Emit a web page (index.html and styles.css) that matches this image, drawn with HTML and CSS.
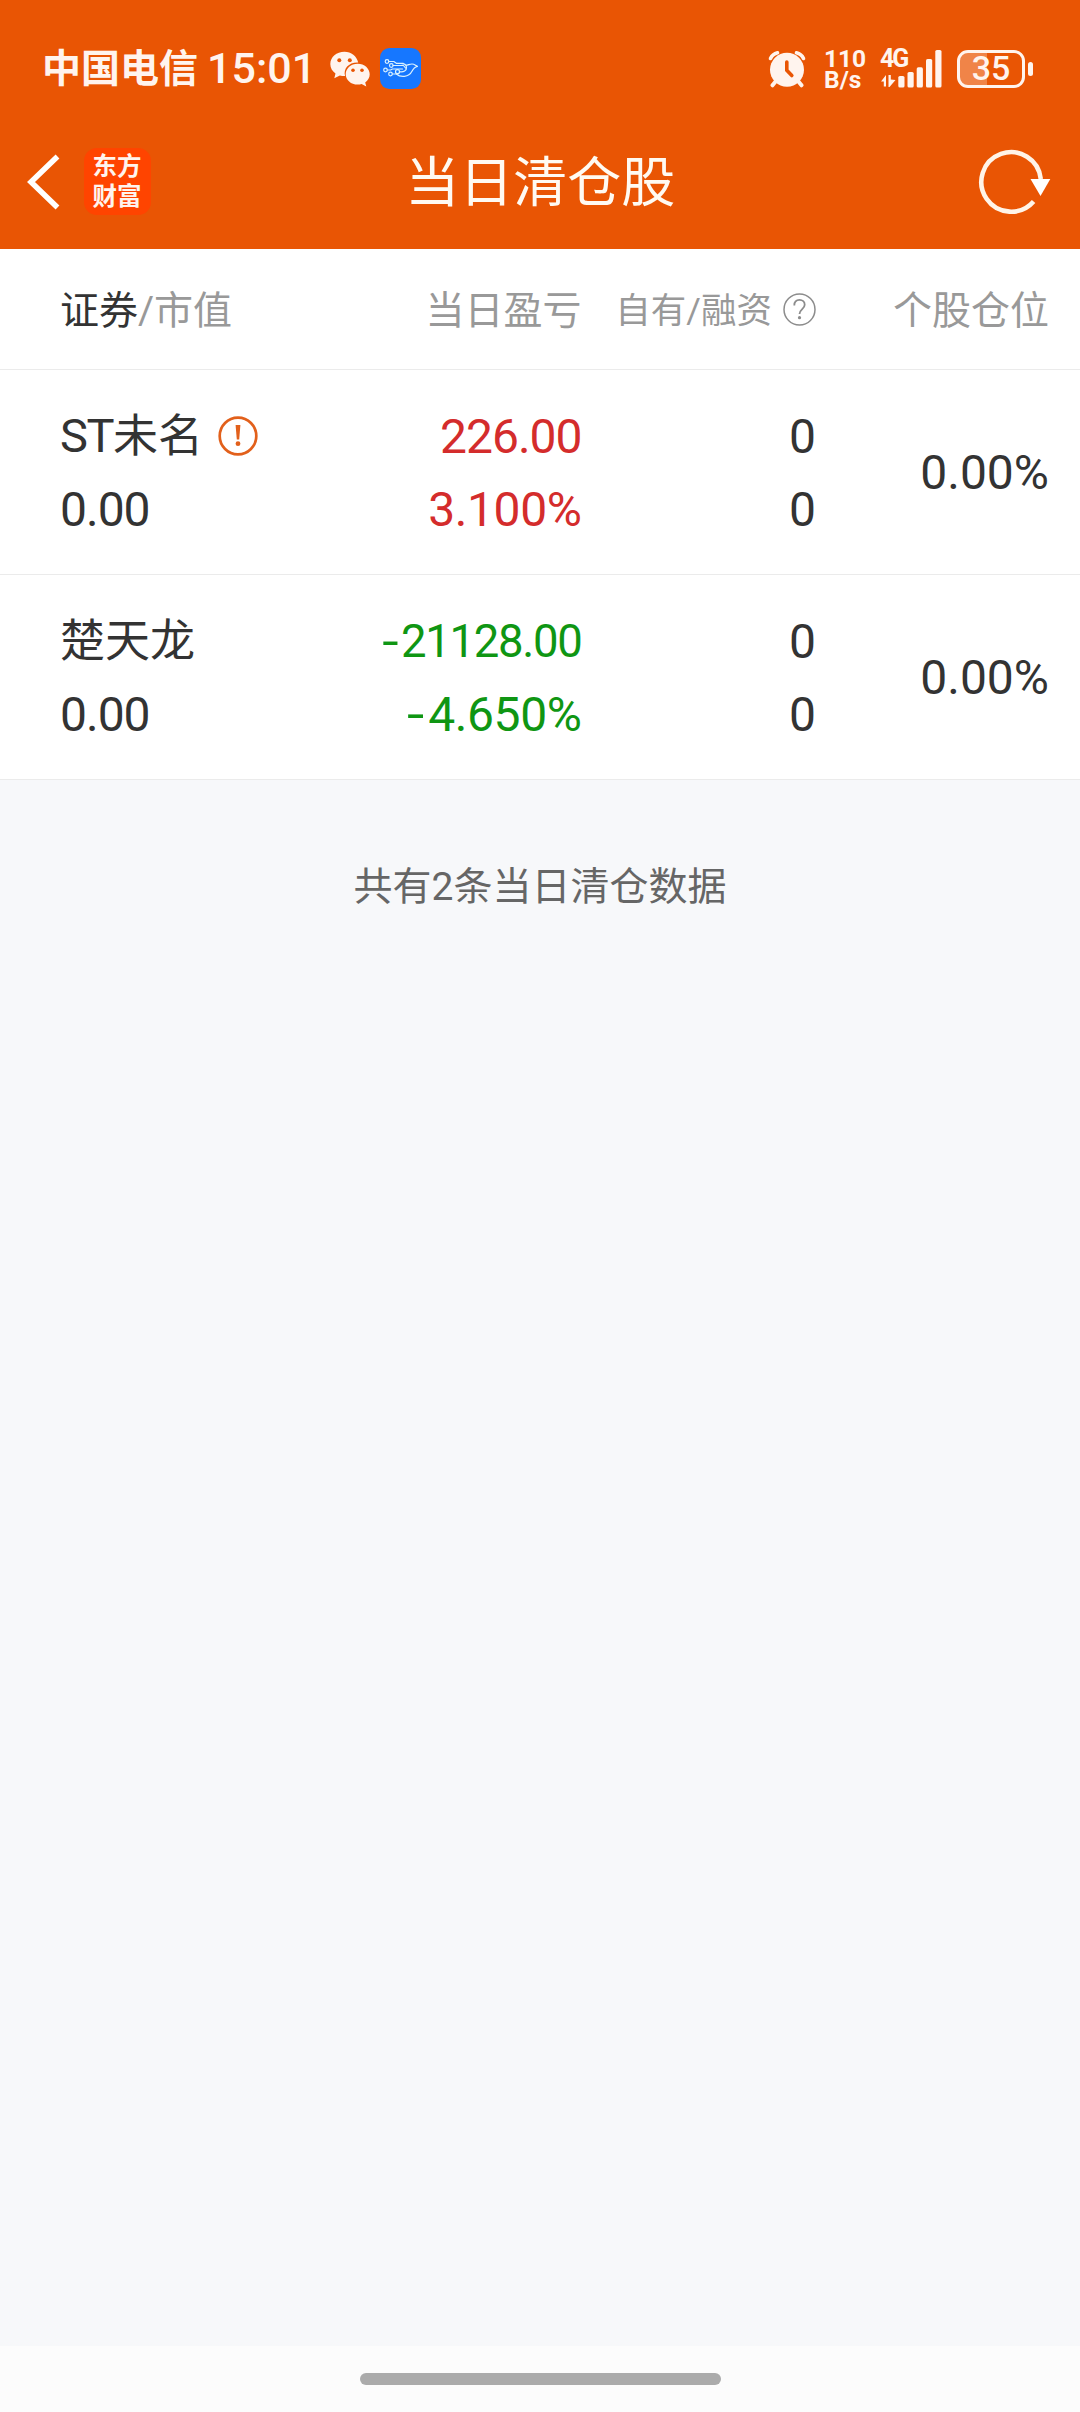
FILE: index.html
```html
<!DOCTYPE html>
<html lang="zh-CN">
<head>
<meta charset="utf-8">
<title>当日清仓股</title>
<link rel="stylesheet" href="styles.css">
</head>
<body>
<header class="top">
  <div class="status">
    <span class="carrier">中国电信</span>
    <span class="clock">15:01</span>
    <svg class="wechat" width="40" height="36" viewBox="0 0 40 36">
      <path class="ink" d="M14.500.7C6.500.7.3 6 .3 13c0 4 2 7.200 5.200 9.500L4.300 27.200l5.600-2.700c1.500.4 3 .6 4.600.6h.6C13 17.500 19 11 28.200 11.500 26.800 5.200 21.200.7 14.500.7z"/>
      <path class="ink" d="M27.700 12.700c-6.700 0-12 4.700-12 10.500s5.300 10.400 12 10.400c1.400 0 2.700-.2 3.900-.6l4.700 2.400-1.100-4c2.800-2 4.500-4.800 4.500-8.200 0-5.800-5.300-10.500-12-10.500z"/>
      <g class="hole"><circle cx="9.300" cy="9.300" r="2"/><circle cx="19.800" cy="9.300" r="2"/><circle cx="23" cy="19.300" r="1.800"/><circle cx="32" cy="19.300" r="1.800"/></g>
    </svg>
    <svg class="bird" width="41" height="41" viewBox="0 0 41 41">
      <rect width="41" height="41" rx="9.500" fill="#1677ff"/>
      <g fill="none" stroke="#d9f1ff" stroke-width="1.200" stroke-linecap="round" stroke-linejoin="round">
        <circle cx="7" cy="13.500" r="1.800"/><circle cx="11.300" cy="17.500" r="1.800"/><circle cx="5.500" cy="22" r="1.800"/><circle cx="10.500" cy="26" r="1.800"/><circle cx="17.500" cy="23.700" r="2"/>
        <path d="M8.800 13.500h5l2.500 1.800h7M13 17.500h10.500l2 2.500M7.300 22h3.200l2-1h10M12.300 26h4c4 3.500 12.500 3.500 15.500-2.500 1.600-3.200 2.500-4.500 5.700-5.200-2-.4-2.600-2.300-5.500-2.300-3 0-3.600 1.200-6.400 1.200M19.500 23.700c4 .8 7.300-1 7-4.500-.3-2.400-2-3.500-4.500-3.500"/>
      </g>
    </svg>
    <svg class="alarm" width="38" height="38" viewBox="0 0 38 38">
      <g fill="none" stroke="#fff4ee" stroke-linecap="round">
        <path stroke-width="3.600" d="M2.500 8.500Q4.500 4 9.500 2.800M35.500 8.500Q33.500 4 28.500 2.800"/>
        <path stroke-width="4" d="M8 31l-3.500 4.300M30 31l3.500 4.300"/>
      </g>
      <circle class="ink" cx="19" cy="19.700" r="17"/>
      <path d="M18.800 12v8.300l5 5.200" fill="none" stroke="#e95504" stroke-width="3.600" stroke-linecap="round"/>
    </svg>
    <span class="speed"><b>110</b><b class="unit">B/s</b></span>
    <span class="network">
      <span class="gen">4G</span>
      <svg width="62" height="38" viewBox="0 0 62 38">
        <path class="ink" d="M1 31.500L6 25v11.500H3.800v-5zM8.500 25H10.800v4.500L15.500 30 9.500 37h-1z"/>
        <rect class="ink" x="18.300" y="26" width="6.200" height="11.500" rx="1.600"/><rect class="ink" x="27.500" y="22" width="6.200" height="15.500" rx="1.600"/><rect class="ink" x="36.700" y="17.300" width="6.200" height="20.200" rx="1.600"/><rect class="ink" x="46" y="9" width="6.200" height="28.500" rx="1.600"/><rect class="ink" x="55.300" y="0" width="6.200" height="37.500" rx="1.600"/>
      </svg>
    </span>
    <span class="battery"><span class="level">35</span></span>
    <span class="cap"></span>
  </div>
  <nav class="bar">
    <svg class="back" width="34" height="58" viewBox="0 0 34 58"><path d="M31.500 3.500L5 29l26.500 25.500" fill="none" stroke="#fff" stroke-width="5.500"/></svg>
    <span class="logo">东方<br>财富</span>
    <h1 class="title">当日清仓股</h1>
    <svg class="refresh" width="74" height="66" viewBox="0 0 74 66">
      <path d="M55.600 52.500A29.800 29.800 0 1 1 62.800 30" fill="none" stroke="#fff4e8" stroke-width="4.600"/>
      <path d="M52.500 30h19.800L62.500 47z" fill="#fff"/>
    </svg>
  </nav>
</header>
<main class="table">
  <div class="row head">
    <div class="name"><span class="dark">证券</span><span class="slash">/</span>市值</div>
    <div>当日盈亏</div>
    <div class="own"><span>自有<span class="slash">/</span>融资</span>
      <svg width="33" height="33" viewBox="0 0 33 33"><circle cx="16.500" cy="16.500" r="15.500" fill="none" stroke="#8c8c8c" stroke-width="1.500"/><path d="M11.300 12.500c0-3.500 2.200-5.600 5.200-5.600s5.200 2 5.200 4.900c0 4.200-5.200 4.500-5.200 9.200" fill="none" stroke="#8c8c8c" stroke-width="1.800"/><circle cx="16.500" cy="24.700" r="1.600" fill="#8c8c8c"/></svg>
    </div>
    <div>个股仓位</div>
  </div>
  <div class="row">
    <div class="name"><div class="stock"><span><span class="st">ST</span>未名</span>
      <svg width="40" height="40" viewBox="0 0 40 40"><circle cx="20" cy="20" r="18.300" fill="none" stroke="#e2601b" stroke-width="2.700"/><path d="M17.600 9h4.800l-1.200 14.500h-2.400z" fill="#e2601b"/><circle cx="20" cy="27.700" r="2.400" fill="#e2601b"/></svg></div><div class="value">0.00</div></div>
    <div class="up"><div class="tight">226.00</div><div class="num">3.100%</div></div>
    <div><div>0</div><div>0</div></div>
    <div class="share">0.00%</div>
  </div>
  <div class="row">
    <div class="name"><div class="stock">楚天龙</div><div class="value">0.00</div></div>
    <div class="down"><div class="long"><span class="sign">-</span>21128.00</div><div class="num"><span class="sign">-</span>4.650%</div></div>
    <div><div>0</div><div>0</div></div>
    <div class="share">0.00%</div>
  </div>
</main>
<p class="summary">共有2条当日清仓数据</p>
<footer class="gesture"><span class="pill"></span></footer>
</body>
</html>
```
FILE: styles.css
```css
* { box-sizing: border-box; }
body {
  margin: 0;
  height: 2412px;
  display: flex;
  flex-direction: column;
  background: #f7f8fa;
  color: #333;
  font-family: Roboto, "Noto Sans CJK SC", sans-serif;
}
svg { display: block; flex: none; }
.ink { fill: #fff4ee; }
.hole { fill: #e95504; }

.top { height: 249px; background: #e95504; color: #fff4ee; }
.status {
  height: 114px;
  padding: 23px 46px 0 42px;
  display: flex;
  align-items: center;
  white-space: nowrap;
}
.carrier { width: 165px; font-size: 39px; font-weight: 700; line-height: 50px; }
.clock { width: 123px; padding-bottom: 2px; font-size: 43px; font-weight: 500; line-height: 50px; }
.bird { margin-left: 10px; }
.alarm { margin-left: 347px; }
.speed {
  margin-left: 18px;
  width: 56px;
  display: flex;
  flex-direction: column;
  font-size: 24.500px;
  line-height: 21px;
}
.speed b { font-weight: 700; }
.network { position: relative; width: 62px; }
.gen { position: absolute; left: 0; top: -1px; font-size: 25px; font-weight: 700; line-height: 20px; letter-spacing: -2px; }
.battery {
  margin-left: 15px;
  width: 68px;
  height: 38px;
  border: 3px solid #fff4ee;
  border-radius: 11px;
  background: linear-gradient(90deg, #f08448 27px, transparent 27px);
  font-size: 34px;
  font-weight: 500;
  line-height: 31px;
  text-align: center;
}
.cap { margin-left: 3px; width: 5px; height: 14px; border-radius: 3px; background: #fff4ee; }

.bar { height: 135px; display: flex; align-items: center; padding: 0 28px 0 26px; }
.logo {
  margin-left: 23.500px;
  width: 67px;
  height: 67px;
  padding-top: 4px;
  border-radius: 13px;
  background: #ff4400;
  font-size: 24.500px;
  font-weight: 700;
  line-height: 29.500px;
  text-align: center;
}
.title {
  flex: 1;
  margin: 0 48px 0 0;
  padding-top: 5px;
  color: #fffaf2;
  font-size: 54px;
  font-weight: 400;
  line-height: 70px;
  text-align: center;
}

.table { background: #fff; }
.row {
  height: 205px;
  padding: 1px 31px 0 60px;
  display: grid;
  grid-template-columns: 301px 220.500px 234.500px 1fr;
  align-items: center;
  border-bottom: 1px solid #ebebeb;
  font-size: 48px;
  line-height: 73px;
  text-align: right;
  white-space: nowrap;
}
.head { height: 121px; padding-top: 3px; color: #999; font-size: 39px; line-height: 60px; }
.name { text-align: left; }
.dark { color: #333; }
.own { display: flex; justify-content: flex-end; align-items: center; gap: 11px; font-size: 35.500px; }
.own svg { margin-bottom: 2px; }
.stock { display: flex; align-items: center; gap: 15px; height: 73px; font-size: 45px; }
.st { font-size: 47px; letter-spacing: -1.500px; }
.value { letter-spacing: -1px; }
.num { letter-spacing: -.4px; }
.tight { letter-spacing: -1px; }
.long { font-size: 45.500px; letter-spacing: -1.300px; }
.sign { display: inline-block; transform: scaleX(1.300); margin-right: 6px; }
.up { color: #d42c2c; }
.down { color: #0f9613; }

.summary { margin: 77px 0 0; color: #666; font-size: 39px; line-height: 60px; text-align: center; }
.gesture { margin-top: auto; height: 66px; padding-top: 27px; background: #fcfcfc; }
.pill { display: block; width: 361px; height: 12px; margin: 0 auto; border-radius: 6px; background: #ababab; }
```
